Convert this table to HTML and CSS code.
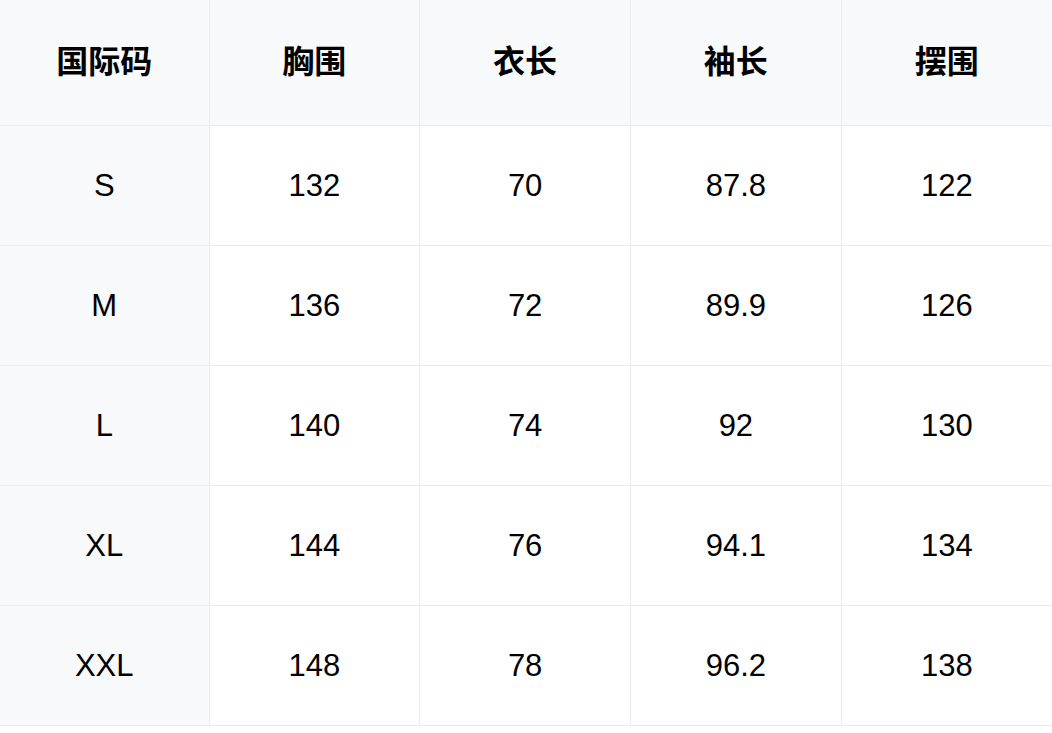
FILE: index.html
```html
<!DOCTYPE html>
<html lang="zh-CN">
<head>
<meta charset="utf-8">
<title>尺码表</title>
<link rel="stylesheet" href="styles.css">
</head>
<body>
<table class="size-table">
  <colgroup>
    <col class="col-first">
    <col>
    <col>
    <col>
    <col>
  </colgroup>
  <thead>
    <tr>
      <th>国际码</th>
      <th>胸围</th>
      <th>衣长</th>
      <th>袖长</th>
      <th>摆围</th>
    </tr>
  </thead>
  <tbody>
    <tr><td class="size">S</td><td>132</td><td>70</td><td>87.8</td><td>122</td></tr>
    <tr><td class="size">M</td><td>136</td><td>72</td><td>89.9</td><td>126</td></tr>
    <tr><td class="size">L</td><td>140</td><td>74</td><td>92</td><td>130</td></tr>
    <tr><td class="size">XL</td><td>144</td><td>76</td><td>94.1</td><td>134</td></tr>
    <tr><td class="size">XXL</td><td>148</td><td>78</td><td>96.2</td><td>138</td></tr>
  </tbody>
</table>
</body>
</html>
```
FILE: styles.css
```css
html, body {
  margin: 0;
  padding: 0;
  background: #ffffff;
}

.size-table {
  width: 1052px;
  table-layout: fixed;
  border-collapse: collapse;
  font-family: "Liberation Sans", "Noto Sans CJK SC", Arial, sans-serif;
  color: #000000;
}

.col-first {
  width: 209px;
}

.size-table th,
.size-table td {
  padding: 0;
  text-align: center;
  vertical-align: middle;
  border-right: 1px solid #ededf0;
  border-bottom: 1px solid #ededf0;
}

.size-table th:last-child,
.size-table td:last-child {
  border-right: none;
}

.size-table th {
  height: 125px;
  box-sizing: border-box;
  background: #f8f9fb;
  font-family: "Noto Sans CJK SC", sans-serif;
  font-weight: 700;
  font-size: 32px;
  padding-bottom: 6px;
}

.size-table td {
  height: 117px;
  padding-top: 2px;
  font-size: 31px;
  font-weight: 400;
}

.size-table td.size {
  background: #f8f9fb;
}
```
